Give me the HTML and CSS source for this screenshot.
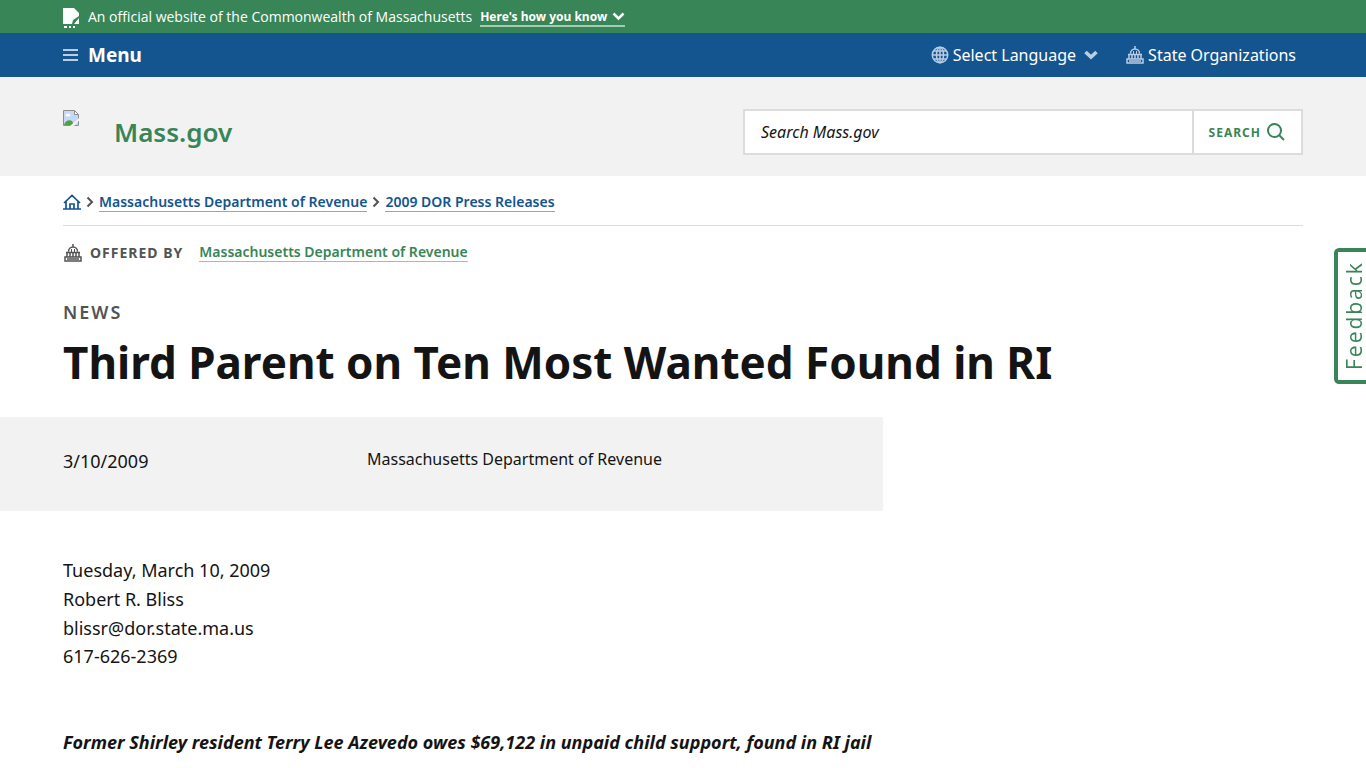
FILE: index.html
```html
<!DOCTYPE html>
<html lang="en">
<head>
    <meta charset="UTF-8">
    <meta name="viewport" content="width=device-width, initial-scale=1.0">
    <title>Third Parent on Ten Most Wanted Found in RI | Mass.gov</title>
    <link rel="stylesheet" href="styles.css">
</head>
<body>
    <!-- Shared icons -->
    <svg class="sprite" aria-hidden="true">
        <symbol id="icon-building" viewBox="0 0 18 18">
            <path d="M9 0v3M4.500 7.500a4.500 4.500 0 0 1 9 0M2 8.500h14M3 9v4M6 9v4M9 9v4M12 9v4M15 9v4M1 13h16v4H1zM3 15h12" fill="none" stroke="currentColor" stroke-width="1.500"/>
            <path d="M7.500 8V5M10.500 8V5" stroke="currentColor"/>
        </symbol>
        <symbol id="icon-chevron" viewBox="0 0 14 10">
            <path d="M1.500 2l5.500 5L12.500 2" fill="none" stroke="currentColor" stroke-width="3.600"/>
        </symbol>
        <symbol id="icon-arrow" viewBox="0 0 8 12">
            <path d="M1.500 1.500L6 6l-4.500 4.500" fill="none" stroke="currentColor" stroke-width="2"/>
        </symbol>
    </svg>

    <div class="banner">
        <div class="container banner-inner">
            <svg class="banner-logo" viewBox="0 0 16 20" aria-hidden="true">
                <path d="M0 0h11l5 5v3l-6 4-1 4H0z" fill="#fff"/>
                <path d="M16 10v6h-5zM1 18h3v2H1zM6 18h2v2H6zM10 18h2v2h-2z" fill="#fff"/>
            </svg>
            <span class="banner-text">An official website of the Commonwealth of Massachusetts</span>
            <button class="banner-toggle" type="button">Here's how you know
                <svg class="banner-chevron" viewBox="0 0 13 9" aria-hidden="true">
                    <path d="M1.500 1.500l5 5 5-5" fill="none" stroke="currentColor" stroke-width="2.500"/>
                </svg>
            </button>
        </div>
    </div>

    <nav class="topbar">
        <div class="container topbar-inner">
            <button class="menu-button" type="button">
                <svg class="menu-icon" viewBox="0 0 15 12" aria-hidden="true">
                    <path d="M0 1h15M0 6h15M0 11h15" stroke="#b9cde4" stroke-width="2"/>
                </svg>
                Menu
            </button>
            <div class="topbar-links">
                <button class="topbar-item" type="button">
                    <svg class="topbar-icon" viewBox="0 0 18 18" aria-hidden="true">
                        <g fill="none" stroke="currentColor" stroke-width="1.500">
                            <circle cx="9" cy="9" r="7.700"/>
                            <ellipse cx="9" cy="9" rx="3.500" ry="7.700"/>
                            <path d="M9 1.500v15M1.500 9h15M2.700 5h12.600M2.700 13h12.600"/>
                        </g>
                    </svg>
                    Select Language
                    <svg class="language-chevron" aria-hidden="true"><use href="#icon-chevron"/></svg>
                </button>
                <a class="topbar-item" href="#">
                    <svg class="topbar-icon" aria-hidden="true"><use href="#icon-building"/></svg>
                    State Organizations
                </a>
            </div>
        </div>
    </nav>

    <header class="header">
        <div class="container header-inner">
            <a class="brand" href="#">
                <svg class="brand-image" viewBox="0 0 16 16" aria-hidden="true">
                    <path d="M.500.500h11l4 4v11H.500z" fill="#c6d7fb" stroke="#8e8e8e"/>
                    <path d="M11.500.500v4h4z" fill="#fff" stroke="#8e8e8e"/>
                    <ellipse cx="5" cy="5" rx="2.500" ry="1.500" fill="#fff"/>
                    <path d="M1 15c1-4 5-6 8-4l2 4z" fill="#4fa33c"/>
                    <path d="M7 16l9-8v2.500L11 16z" fill="#f2f2f2"/>
                </svg>
                <span class="brand-name">Mass.gov</span>
            </a>
            <form class="search">
                <input class="search-input" type="text" placeholder="Search Mass.gov" aria-label="Search Mass.gov">
                <button class="search-button" type="button">Search
                    <svg class="search-icon" viewBox="0 0 18 18" aria-hidden="true">
                        <circle cx="7.500" cy="7.500" r="6.500" fill="none" stroke="currentColor" stroke-width="2"/>
                        <path d="M12 12l5 5" stroke="currentColor" stroke-width="2"/>
                    </svg>
                </button>
            </form>
        </div>
    </header>

    <main>
        <div class="container">
            <nav class="breadcrumbs" aria-label="Breadcrumbs">
                <a class="home-link" href="#" aria-label="Home">
                    <svg class="home-icon" viewBox="0 0 18 16" aria-hidden="true">
                        <path d="M0 15h18M3 15V7M15 15V7M1 9l8-7.500L17 9M7 14.500V10h4v4.500" fill="none" stroke="currentColor" stroke-width="1.700"/>
                    </svg>
                </a>
                <svg class="crumb-arrow" aria-hidden="true"><use href="#icon-arrow"/></svg>
                <a class="crumb" href="#">Massachusetts Department of Revenue</a>
                <svg class="crumb-arrow" aria-hidden="true"><use href="#icon-arrow"/></svg>
                <a class="crumb" href="#">2009 DOR Press Releases</a>
            </nav>

            <div class="offered-by">
                <svg class="offered-icon" aria-hidden="true"><use href="#icon-building"/></svg>
                <span class="offered-label">Offered by</span>
                <a class="offered-link" href="#">Massachusetts Department of Revenue</a>
            </div>

            <div class="page-header">
                <div class="eyebrow">News</div>
                <h1 class="page-title">Third Parent on Ten Most Wanted Found in RI</h1>
            </div>
        </div>

        <div class="press-status">
            <div class="press-date">3/10/2009</div>
            <div class="press-org">Massachusetts Department of Revenue</div>
        </div>

        <div class="container">
            <article class="rich-text">
                <p>Tuesday, March 10, 2009<br>
                Robert R. Bliss<br>
                blissr@dor.state.ma.us<br>
                617-626-2369</p>
                <p class="lead">Former Shirley resident Terry Lee Azevedo owes $69,122 in unpaid child support, found in RI jail</p>
            </article>
        </div>
    </main>

    <button class="feedback" type="button">Feedback</button>
</body>
</html>
```
FILE: styles.css
```css
* {
    margin: 0;
    padding: 0;
    box-sizing: border-box;
}

body {
    font-family: "Noto Sans", sans-serif;
    font-size: 18px;
    line-height: 29px;
    color: #141414;
    background: #fff;
}

button,
input {
    font: inherit;
    color: inherit;
    border: 0;
    background: none;
}

button {
    cursor: pointer;
}

a {
    color: inherit;
    text-decoration: none;
}

svg {
    flex: none;
}

.sprite {
    display: none;
}

.container {
    width: 100%;
    max-width: 1300px;
    margin: 0 auto;
    padding: 0 30px;
}

/* Official banner */
.banner {
    background: #388557;
    color: #fff;
}

.banner-inner {
    display: flex;
    align-items: center;
    height: 33px;
}

.banner-logo {
    width: 16px;
    height: 20px;
    margin-right: 9px;
    margin-top: 3px;
}

.banner-text {
    font-family: "Open Sans", "Noto Sans", sans-serif;
    font-size: 14px;
    line-height: 20px;
}

.banner-toggle {
    display: flex;
    align-items: center;
    gap: 5px;
    margin-left: 8px;
    margin-top: 2px;
    font-size: 12px;
    font-weight: 700;
    line-height: 16px;
    border-bottom: 2px solid #a5cab4;
}

.banner-chevron {
    width: 13px;
    height: 9px;
}

/* Menu bar */
.topbar {
    background: #14558f;
    color: #fff;
}

.topbar-inner {
    display: flex;
    align-items: center;
    justify-content: space-between;
    height: 44px;
}

.menu-button {
    display: flex;
    align-items: center;
    gap: 10px;
    font-size: 19px;
    font-weight: 700;
}

.menu-icon {
    width: 15px;
    height: 12px;
}

.topbar-links {
    display: flex;
    gap: 28px;
    padding-right: 7px;
}

.topbar-item {
    display: flex;
    align-items: center;
    gap: 4px;
    font-size: 16px;
}

.topbar-icon {
    width: 18px;
    height: 18px;
    color: #b9cde4;
}

.language-chevron {
    width: 14px;
    height: 10px;
    margin-left: 4px;
    color: #b9cde4;
}

/* Header */
.header {
    background: #f2f2f2;
}

.header-inner {
    display: flex;
    align-items: center;
    justify-content: space-between;
    padding-top: 32px;
    padding-bottom: 21px;
}

.brand {
    display: flex;
    gap: 35px;
}

.brand-image {
    width: 16px;
    height: 16px;
    margin-top: 1px;
}

.brand-name {
    font-size: 26px;
    font-weight: 600;
    line-height: 46px;
    color: #388557;
}

.search {
    display: flex;
    width: 560px;
    height: 46px;
    background: #fff;
    border: 2px solid #dcdcdc;
}

.search-input {
    flex: 1;
    min-width: 0;
    padding: 0 16px;
    font-size: 16px;
    font-style: italic;
}

.search-input::placeholder {
    color: #141414;
    opacity: 1;
}

.search-button {
    display: flex;
    align-items: center;
    gap: 6px;
    padding: 0 16px 0 15px;
    font-size: 12px;
    font-weight: 700;
    letter-spacing: 1px;
    text-transform: uppercase;
    color: #388557;
    border-left: 2px solid #dcdcdc;
}

.search-icon {
    width: 18px;
    height: 18px;
}

/* Breadcrumbs */
.breadcrumbs {
    display: flex;
    align-items: center;
    height: 50px;
    padding-top: 2px;
    border-bottom: 1px solid #dcdcdc;
    font-size: 14px;
    font-weight: 600;
    line-height: 18px;
    color: #14558f;
}

.home-link {
    display: flex;
}

.home-icon {
    width: 18px;
    height: 16px;
}

.crumb-arrow {
    width: 8px;
    height: 12px;
    margin: 0 5px;
    color: #535353;
}

.crumb {
    margin-top: 1px;
    border-bottom: 1px solid #89aac7;
}

.offered-by {
    display: flex;
    align-items: center;
    margin-top: 17px;
    font-size: 14px;
    font-weight: 600;
    line-height: 18px;
}

.offered-icon {
    width: 20px;
    height: 18px;
    margin-right: 7px;
    color: #535353;
}

.offered-label {
    margin-right: 16px;
    font-weight: 700;
    letter-spacing: 1px;
    text-transform: uppercase;
    color: #535353;
}

.offered-link {
    color: #388557;
    border-bottom: 1px solid #9bc2ab;
}

/* Page title */
.page-header {
    padding: 36px 0 26px;
}

.eyebrow {
    font-weight: 600;
    letter-spacing: 2px;
    text-transform: uppercase;
    color: #535353;
}

.page-title {
    margin-top: 6px;
    font-size: 44px;
    font-weight: 700;
    line-height: 58px;
}

/* Date and organization strip */
.press-status {
    display: grid;
    grid-template-columns: 304px 1fr;
    width: calc(50% + 200px);
    padding: 30px 30px 35px max(30px, calc(50vw - 620px));
    background: #f2f2f2;
    border-radius: 0 2px 2px 0;
}

.press-org {
    font-size: 16px;
    line-height: 25px;
}

.rich-text {
    padding: 45px 0;
    line-height: 1.6;
}

.lead {
    margin-top: 57px;
    font-weight: 700;
    font-style: italic;
}

/* Feedback tab pinned over the right edge */
.feedback {
    position: fixed;
    top: 248px;
    right: 0;
    height: 136px;
    padding: 0 4px 0 0;
    writing-mode: vertical-rl;
    transform: rotate(180deg);
    font-family: "Open Sans", "Noto Sans", sans-serif;
    font-size: 21px;
    line-height: 24px;
    letter-spacing: 2px;
    color: #388557;
    background: #fff;
    border: 4px solid #388557;
    border-left: 0;
    border-radius: 0 5px 5px 0;
}
```
